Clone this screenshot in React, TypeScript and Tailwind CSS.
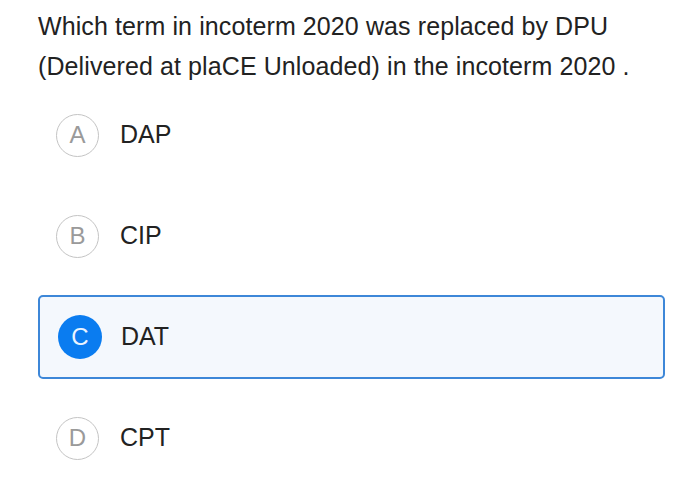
const options = [
  { key: "A", label: "DAP" },
  { key: "B", label: "CIP" },
  { key: "C", label: "DAT" },
  { key: "D", label: "CPT" },
];

const selected = "C";

export default function App() {
  return (
    <div
      className="h-[484px] w-[700px] bg-white pl-[38px] pt-[6px] text-[#222]"
      style={{ fontFamily: '"Liberation Sans", Arial, sans-serif' }}
    >
      <p className="w-[630px] text-[25px] leading-[40px] tracking-[0.1px]">
        Which term in incoterm 2020 was replaced by DPU (Delivered at plaCE Unloaded) in the incoterm 2020 .
      </p>
      <div className="mt-[7px] flex w-[627px] flex-col gap-[17px]">
        {options.map((o) => {
          const on = o.key === selected;
          return (
            <div
              key={o.key}
              className={
                on
                  ? "flex h-[84px] items-center gap-[19px] rounded-[5px] border-[2px] border-[#3d87d8] bg-[#f4f8fd] pl-[18px]"
                  : "flex h-[84px] items-center gap-[21px] rounded-[5px] border-[2px] border-transparent pl-[16px]"
              }
            >
              <div
                className={
                  on
                    ? "flex size-[44px] items-center justify-center rounded-full bg-[#0a7cf0] text-[24px] text-[#eaf4ff]"
                    : "flex size-[43px] items-center justify-center rounded-full border-[1.5px] border-[#c4c4c4] text-[24px] text-[#9a9a9a]"
                }
              >
                {o.key}
              </div>
              <span className="text-[25px]">{o.label}</span>
            </div>
          );
        })}
      </div>
    </div>
  );
}
